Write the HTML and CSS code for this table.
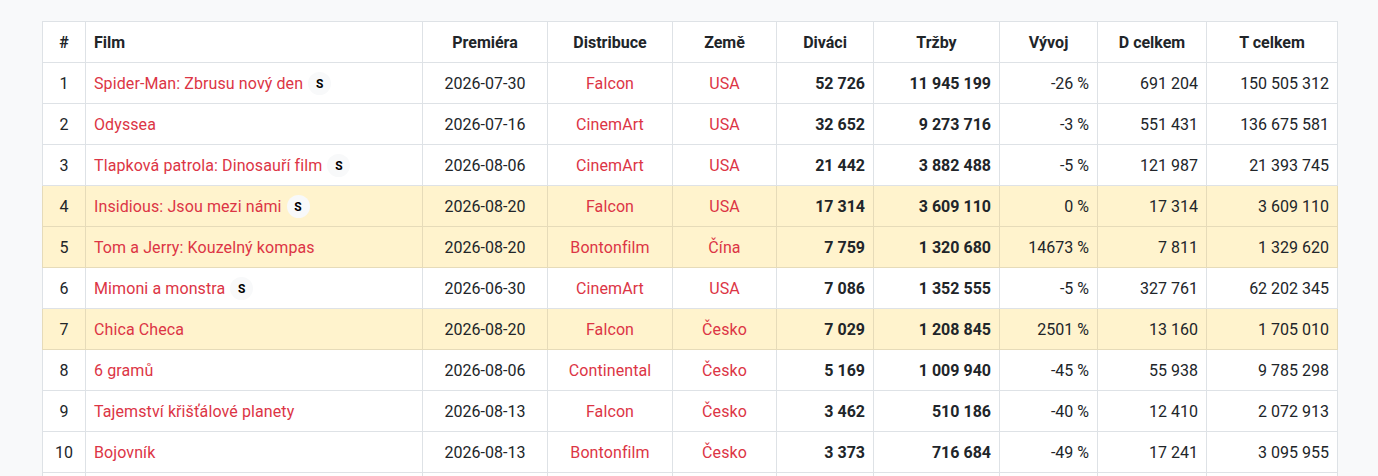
FILE: index.html
```html
<!DOCTYPE html>
<html lang="cs">
<head>
<meta charset="utf-8">
<title>Návštěvnost kin</title>
<link rel="stylesheet" href="styles.css">
</head>
<body>
<main class="page">
<table class="chart">
<colgroup>
<col class="c-rank"><col class="c-film"><col class="c-date"><col class="c-dist"><col class="c-country"><col class="c-viewers"><col class="c-gross"><col class="c-trend"><col class="c-dtotal"><col class="c-ttotal">
</colgroup>
<thead>
<tr>
<th class="center">#</th><th class="left">Film</th><th>Premiéra</th><th>Distribuce</th><th>Země</th><th>Diváci</th><th>Tržby</th><th>Vývoj</th><th>D celkem</th><th>T celkem</th>
</tr>
</thead>
<tbody>
<tr><td class="center">1</td><td><a class="link" href="#">Spider-Man: Zbrusu nový den</a> <span class="badge">S</span></td><td class="center">2026-07-30</td><td class="center"><a class="link" href="#">Falcon</a></td><td class="center"><a class="link" href="#">USA</a></td><td class="num strong">52 726</td><td class="num strong">11 945 199</td><td class="num">-26 %</td><td class="num">691 204</td><td class="num">150 505 312</td></tr>
<tr><td class="center">2</td><td><a class="link" href="#">Odyssea</a></td><td class="center">2026-07-16</td><td class="center"><a class="link" href="#">CinemArt</a></td><td class="center"><a class="link" href="#">USA</a></td><td class="num strong">32 652</td><td class="num strong">9 273 716</td><td class="num">-3 %</td><td class="num">551 431</td><td class="num">136 675 581</td></tr>
<tr><td class="center">3</td><td><a class="link" href="#">Tlapková patrola: Dinosauří film</a> <span class="badge">S</span></td><td class="center">2026-08-06</td><td class="center"><a class="link" href="#">CinemArt</a></td><td class="center"><a class="link" href="#">USA</a></td><td class="num strong">21 442</td><td class="num strong">3 882 488</td><td class="num">-5 %</td><td class="num">121 987</td><td class="num">21 393 745</td></tr>
<tr class="new"><td class="center">4</td><td><a class="link" href="#">Insidious: Jsou mezi námi</a> <span class="badge">S</span></td><td class="center">2026-08-20</td><td class="center"><a class="link" href="#">Falcon</a></td><td class="center"><a class="link" href="#">USA</a></td><td class="num strong">17 314</td><td class="num strong">3 609 110</td><td class="num">0 %</td><td class="num">17 314</td><td class="num">3 609 110</td></tr>
<tr class="new"><td class="center">5</td><td><a class="link" href="#">Tom a Jerry: Kouzelný kompas</a></td><td class="center">2026-08-20</td><td class="center"><a class="link" href="#">Bontonfilm</a></td><td class="center"><a class="link" href="#">Čína</a></td><td class="num strong">7 759</td><td class="num strong">1 320 680</td><td class="num">14673 %</td><td class="num">7 811</td><td class="num">1 329 620</td></tr>
<tr><td class="center">6</td><td><a class="link" href="#">Mimoni a monstra</a> <span class="badge">S</span></td><td class="center">2026-06-30</td><td class="center"><a class="link" href="#">CinemArt</a></td><td class="center"><a class="link" href="#">USA</a></td><td class="num strong">7 086</td><td class="num strong">1 352 555</td><td class="num">-5 %</td><td class="num">327 761</td><td class="num">62 202 345</td></tr>
<tr class="new"><td class="center">7</td><td><a class="link" href="#">Chica Checa</a></td><td class="center">2026-08-20</td><td class="center"><a class="link" href="#">Falcon</a></td><td class="center"><a class="link" href="#">Česko</a></td><td class="num strong">7 029</td><td class="num strong">1 208 845</td><td class="num">2501 %</td><td class="num">13 160</td><td class="num">1 705 010</td></tr>
<tr><td class="center">8</td><td><a class="link" href="#">6 gramů</a></td><td class="center">2026-08-06</td><td class="center"><a class="link" href="#">Continental</a></td><td class="center"><a class="link" href="#">Česko</a></td><td class="num strong">5 169</td><td class="num strong">1 009 940</td><td class="num">-45 %</td><td class="num">55 938</td><td class="num">9 785 298</td></tr>
<tr><td class="center">9</td><td><a class="link" href="#">Tajemství křišťálové planety</a></td><td class="center">2026-08-13</td><td class="center"><a class="link" href="#">Falcon</a></td><td class="center"><a class="link" href="#">Česko</a></td><td class="num strong">3 462</td><td class="num strong">510 186</td><td class="num">-40 %</td><td class="num">12 410</td><td class="num">2 072 913</td></tr>
<tr><td class="center">10</td><td><a class="link" href="#">Bojovník</a></td><td class="center">2026-08-13</td><td class="center"><a class="link" href="#">Bontonfilm</a></td><td class="center"><a class="link" href="#">Česko</a></td><td class="num strong">3 373</td><td class="num strong">716 684</td><td class="num">-49 %</td><td class="num">17 241</td><td class="num">3 095 955</td></tr>
<tr><td>&nbsp;</td><td>&nbsp;</td><td>&nbsp;</td><td>&nbsp;</td><td>&nbsp;</td><td>&nbsp;</td><td>&nbsp;</td><td>&nbsp;</td><td>&nbsp;</td><td>&nbsp;</td></tr>
</tbody>
</table>
</main>
</body>
</html>
```
FILE: styles.css
```css
* { box-sizing: border-box; }
html, body { margin: 0; padding: 0; }
body {
  background: #f8f9fa;
  color: #212529;
  font-family: Roboto, "Liberation Sans", sans-serif;
  font-size: 16px;
  line-height: 1.5;
}
.page {
  padding: 21px 41px 0 42px;
}
.chart {
  width: 1295px;
  table-layout: fixed;
  border-collapse: collapse;
  background: #fff;
}
.c-rank { width: 43px; }
.c-film { width: 337px; }
.c-date { width: 125px; }
.c-dist { width: 125px; }
.c-country { width: 104px; }
.c-viewers { width: 97px; }
.c-gross { width: 126px; }
.c-trend { width: 98px; }
.c-dtotal { width: 109px; }
.c-ttotal { width: 131px; }
.chart th, .chart td {
  border: 1px solid #dee2e6;
  padding: 9px 8px 7px;
  height: 41px;
  vertical-align: middle;
  white-space: nowrap;
}
.chart th {
  font-weight: 700;
  text-align: center;
}
.chart th.left { text-align: left; }
.center { text-align: center; }
.num { text-align: right; }
.strong { font-weight: 700; }
.link {
  color: #dc3545;
  text-decoration: none;
  letter-spacing: 0.1px;
}
.new td {
  background: #fff3cd;
  border-color: #e6dbb9;
}
.badge {
  display: inline-flex;
  align-items: center;
  justify-content: center;
  width: 23px;
  height: 23px;
  margin-left: 1px;
  border-radius: 50%;
  background: #f8f9fa;
  color: #000;
  font-size: 12px;
  font-weight: 700;
  line-height: 1;
  vertical-align: middle;
  margin-top: -2px;
}
```
